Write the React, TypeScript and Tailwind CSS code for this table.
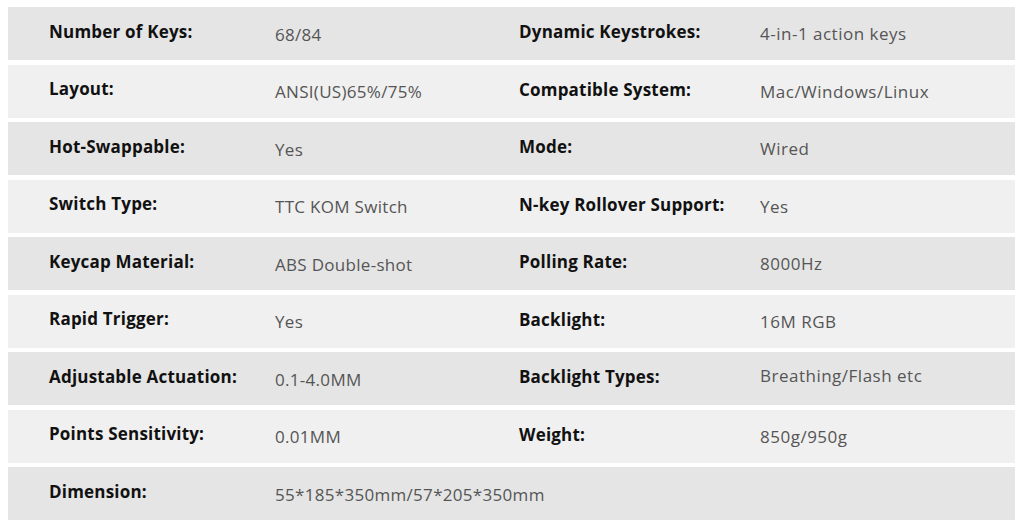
const ROWS = [
  { a: "Number of Keys", av: "68/84", b: "Dynamic Keystrokes", bv: "4-in-1 action keys" },
  { a: "Layout", av: "ANSI(US)65%/75%", b: "Compatible System", bv: "Mac/Windows/Linux" },
  { a: "Hot-Swappable", av: "Yes", b: "Mode", bv: "Wired" },
  { a: "Switch Type", av: "TTC KOM Switch", b: "N-key Rollover Support", bv: "Yes" },
  { a: "Keycap Material", av: "ABS Double-shot", b: "Polling Rate", bv: "8000Hz" },
  { a: "Rapid Trigger", av: "Yes", b: "Backlight", bv: "16M RGB" },
  { a: "Adjustable Actuation", av: "0.1-4.0MM", b: "Backlight Types", bv: "Breathing/Flash etc", up: true },
  { a: "Points Sensitivity", av: "0.01MM", b: "Weight", bv: "850g/950g" },
  { a: "Dimension", av: "55*185*350mm/57*205*350mm", b: "", bv: "" },
];

const font = { fontFamily: "'Open Sans', 'Noto Sans', sans-serif" };

export default function App() {
  return (
    <div className="w-[1027px] h-[523px] bg-white pt-[7px] pl-[8px] pr-[12px] flex flex-col gap-[4.5px]" style={font}>
      {ROWS.map((r, i) => (
        <div
          key={i}
          className={`h-[53px] shrink-0 grid grid-cols-[226px_244px_241px_1fr] items-center pl-[41px] ${
            i % 2 === 0 ? "bg-[#e5e5e5]" : "bg-[#f0f0f0]"
          }`}
        >
          <div className="text-[17px] font-bold text-[#111] pb-[4px] whitespace-nowrap tracking-[0.2px]">
            {r.a}:
          </div>
          <div className="text-[17px] text-[#555] pt-[2px] whitespace-nowrap tracking-[0.3px]">{r.av}</div>
          <div className="text-[17px] font-bold text-[#111] pb-[3px] whitespace-nowrap tracking-[0.2px]">
            {r.b ? `${r.b}:` : ""}
          </div>
          <div className={`text-[17px] text-[#555] whitespace-nowrap tracking-[0.5px] ${r.up ? "pb-[6px]" : "pt-[1px]"}`}>
            {r.bv}
          </div>
        </div>
      ))}
    </div>
  );
}
